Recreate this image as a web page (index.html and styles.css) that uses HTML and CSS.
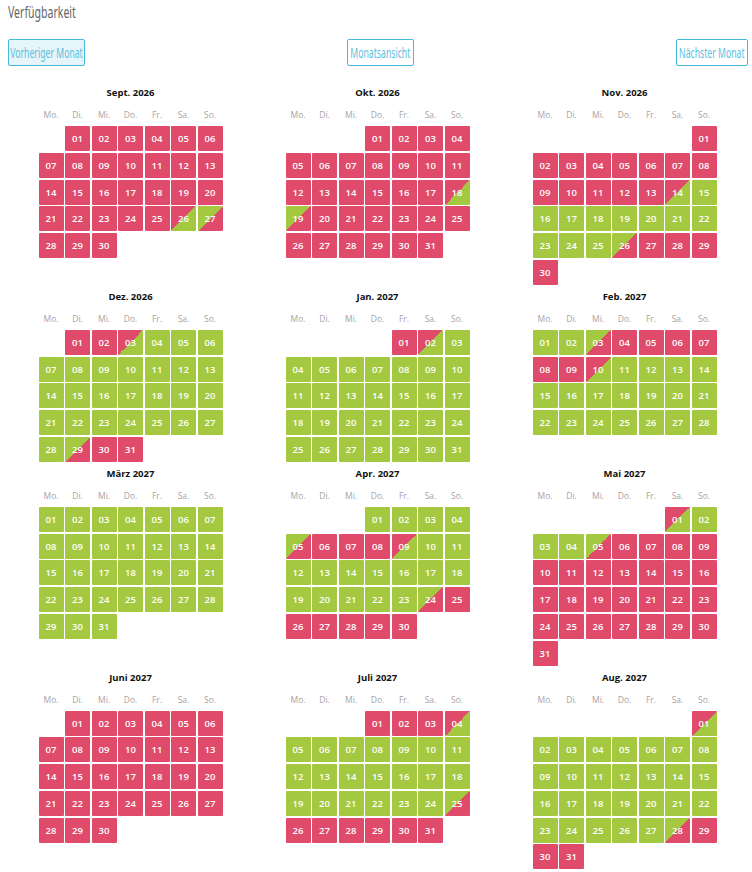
FILE: index.html
```html
<!DOCTYPE html>
<html lang="de">
<head>
<meta charset="utf-8">
<title>Verfügbarkeit</title>
<link rel="stylesheet" href="styles.css">
</head>
<body>
<div class="page">
  <h2 class="heading"><span class="narrow">Verfügbarkeit</span></h2>
  <div class="nav">
    <button class="btn btn-prev active"><span class="narrow">Vorheriger Monat</span></button>
    <button class="btn btn-month"><span class="narrow">Monatsansicht</span></button>
    <button class="btn btn-next"><span class="narrow">Nächster Monat</span></button>
  </div>
  <div class="months">

    <div class="month">
      <div class="mtitle">Sept. 2026</div>
      <div class="wd"><span>Mo.</span><span>Di.</span><span>Mi.</span><span>Do.</span><span>Fr.</span><span>Sa.</span><span>So.</span></div>
      <div class="days">
        <span class="r c2">01</span><span class="r">02</span><span class="r">03</span><span class="r">04</span><span class="r">05</span><span class="r">06</span>
        <span class="r">07</span><span class="r">08</span><span class="r">09</span><span class="r">10</span><span class="r">11</span><span class="r">12</span><span class="r">13</span>
        <span class="r">14</span><span class="r">15</span><span class="r">16</span><span class="r">17</span><span class="r">18</span><span class="r">19</span><span class="r">20</span>
        <span class="r">21</span><span class="r">22</span><span class="r">23</span><span class="r">24</span><span class="r">25</span><span class="rg">26</span><span class="gr">27</span>
        <span class="r">28</span><span class="r">29</span><span class="r">30</span>
      </div>
    </div>

    <div class="month">
      <div class="mtitle">Okt. 2026</div>
      <div class="wd"><span>Mo.</span><span>Di.</span><span>Mi.</span><span>Do.</span><span>Fr.</span><span>Sa.</span><span>So.</span></div>
      <div class="days">
        <span class="r c4">01</span><span class="r">02</span><span class="r">03</span><span class="r">04</span>
        <span class="r">05</span><span class="r">06</span><span class="r">07</span><span class="r">08</span><span class="r">09</span><span class="r">10</span><span class="r">11</span>
        <span class="r">12</span><span class="r">13</span><span class="r">14</span><span class="r">15</span><span class="r">16</span><span class="r">17</span><span class="rg">18</span>
        <span class="gr">19</span><span class="r">20</span><span class="r">21</span><span class="r">22</span><span class="r">23</span><span class="r">24</span><span class="r">25</span>
        <span class="r">26</span><span class="r">27</span><span class="r">28</span><span class="r">29</span><span class="r">30</span><span class="r">31</span>
      </div>
    </div>

    <div class="month">
      <div class="mtitle">Nov. 2026</div>
      <div class="wd"><span>Mo.</span><span>Di.</span><span>Mi.</span><span>Do.</span><span>Fr.</span><span>Sa.</span><span>So.</span></div>
      <div class="days">
        <span class="r c7">01</span>
        <span class="r">02</span><span class="r">03</span><span class="r">04</span><span class="r">05</span><span class="r">06</span><span class="r">07</span><span class="r">08</span>
        <span class="r">09</span><span class="r">10</span><span class="r">11</span><span class="r">12</span><span class="r">13</span><span class="rg">14</span><span class="g">15</span>
        <span class="g">16</span><span class="g">17</span><span class="g">18</span><span class="g">19</span><span class="g">20</span><span class="g">21</span><span class="g">22</span>
        <span class="g">23</span><span class="g">24</span><span class="g">25</span><span class="gr">26</span><span class="r">27</span><span class="r">28</span><span class="r">29</span>
        <span class="r">30</span>
      </div>
    </div>

    <div class="month">
      <div class="mtitle">Dez. 2026</div>
      <div class="wd"><span>Mo.</span><span>Di.</span><span>Mi.</span><span>Do.</span><span>Fr.</span><span>Sa.</span><span>So.</span></div>
      <div class="days">
        <span class="r c2">01</span><span class="r">02</span><span class="rg">03</span><span class="g">04</span><span class="g">05</span><span class="g">06</span>
        <span class="g">07</span><span class="g">08</span><span class="g">09</span><span class="g">10</span><span class="g">11</span><span class="g">12</span><span class="g">13</span>
        <span class="g">14</span><span class="g">15</span><span class="g">16</span><span class="g">17</span><span class="g">18</span><span class="g">19</span><span class="g">20</span>
        <span class="g">21</span><span class="g">22</span><span class="g">23</span><span class="g">24</span><span class="g">25</span><span class="g">26</span><span class="g">27</span>
        <span class="g">28</span><span class="gr">29</span><span class="r">30</span><span class="r">31</span>
      </div>
    </div>

    <div class="month">
      <div class="mtitle">Jan. 2027</div>
      <div class="wd"><span>Mo.</span><span>Di.</span><span>Mi.</span><span>Do.</span><span>Fr.</span><span>Sa.</span><span>So.</span></div>
      <div class="days">
        <span class="r c5">01</span><span class="rg">02</span><span class="g">03</span>
        <span class="g">04</span><span class="g">05</span><span class="g">06</span><span class="g">07</span><span class="g">08</span><span class="g">09</span><span class="g">10</span>
        <span class="g">11</span><span class="g">12</span><span class="g">13</span><span class="g">14</span><span class="g">15</span><span class="g">16</span><span class="g">17</span>
        <span class="g">18</span><span class="g">19</span><span class="g">20</span><span class="g">21</span><span class="g">22</span><span class="g">23</span><span class="g">24</span>
        <span class="g">25</span><span class="g">26</span><span class="g">27</span><span class="g">28</span><span class="g">29</span><span class="g">30</span><span class="g">31</span>
      </div>
    </div>

    <div class="month">
      <div class="mtitle">Feb. 2027</div>
      <div class="wd"><span>Mo.</span><span>Di.</span><span>Mi.</span><span>Do.</span><span>Fr.</span><span>Sa.</span><span>So.</span></div>
      <div class="days">
        <span class="g">01</span><span class="g">02</span><span class="gr">03</span><span class="r">04</span><span class="r">05</span><span class="r">06</span><span class="r">07</span>
        <span class="r">08</span><span class="r">09</span><span class="rg">10</span><span class="g">11</span><span class="g">12</span><span class="g">13</span><span class="g">14</span>
        <span class="g">15</span><span class="g">16</span><span class="g">17</span><span class="g">18</span><span class="g">19</span><span class="g">20</span><span class="g">21</span>
        <span class="g">22</span><span class="g">23</span><span class="g">24</span><span class="g">25</span><span class="g">26</span><span class="g">27</span><span class="g">28</span>
      </div>
    </div>

    <div class="month">
      <div class="mtitle">März 2027</div>
      <div class="wd"><span>Mo.</span><span>Di.</span><span>Mi.</span><span>Do.</span><span>Fr.</span><span>Sa.</span><span>So.</span></div>
      <div class="days">
        <span class="g">01</span><span class="g">02</span><span class="g">03</span><span class="g">04</span><span class="g">05</span><span class="g">06</span><span class="g">07</span>
        <span class="g">08</span><span class="g">09</span><span class="g">10</span><span class="g">11</span><span class="g">12</span><span class="g">13</span><span class="g">14</span>
        <span class="g">15</span><span class="g">16</span><span class="g">17</span><span class="g">18</span><span class="g">19</span><span class="g">20</span><span class="g">21</span>
        <span class="g">22</span><span class="g">23</span><span class="g">24</span><span class="g">25</span><span class="g">26</span><span class="g">27</span><span class="g">28</span>
        <span class="g">29</span><span class="g">30</span><span class="g">31</span>
      </div>
    </div>

    <div class="month">
      <div class="mtitle">Apr. 2027</div>
      <div class="wd"><span>Mo.</span><span>Di.</span><span>Mi.</span><span>Do.</span><span>Fr.</span><span>Sa.</span><span>So.</span></div>
      <div class="days">
        <span class="g c4">01</span><span class="g">02</span><span class="g">03</span><span class="g">04</span>
        <span class="gr">05</span><span class="r">06</span><span class="r">07</span><span class="r">08</span><span class="rg">09</span><span class="g">10</span><span class="g">11</span>
        <span class="g">12</span><span class="g">13</span><span class="g">14</span><span class="g">15</span><span class="g">16</span><span class="g">17</span><span class="g">18</span>
        <span class="g">19</span><span class="g">20</span><span class="g">21</span><span class="g">22</span><span class="g">23</span><span class="gr">24</span><span class="r">25</span>
        <span class="r">26</span><span class="r">27</span><span class="r">28</span><span class="r">29</span><span class="r">30</span>
      </div>
    </div>

    <div class="month">
      <div class="mtitle">Mai 2027</div>
      <div class="wd"><span>Mo.</span><span>Di.</span><span>Mi.</span><span>Do.</span><span>Fr.</span><span>Sa.</span><span>So.</span></div>
      <div class="days">
        <span class="rg c6">01</span><span class="g">02</span>
        <span class="g">03</span><span class="g">04</span><span class="gr">05</span><span class="r">06</span><span class="r">07</span><span class="r">08</span><span class="r">09</span>
        <span class="r">10</span><span class="r">11</span><span class="r">12</span><span class="r">13</span><span class="r">14</span><span class="r">15</span><span class="r">16</span>
        <span class="r">17</span><span class="r">18</span><span class="r">19</span><span class="r">20</span><span class="r">21</span><span class="r">22</span><span class="r">23</span>
        <span class="r">24</span><span class="r">25</span><span class="r">26</span><span class="r">27</span><span class="r">28</span><span class="r">29</span><span class="r">30</span>
        <span class="r">31</span>
      </div>
    </div>

    <div class="month">
      <div class="mtitle">Juni 2027</div>
      <div class="wd"><span>Mo.</span><span>Di.</span><span>Mi.</span><span>Do.</span><span>Fr.</span><span>Sa.</span><span>So.</span></div>
      <div class="days">
        <span class="r c2">01</span><span class="r">02</span><span class="r">03</span><span class="r">04</span><span class="r">05</span><span class="r">06</span>
        <span class="r">07</span><span class="r">08</span><span class="r">09</span><span class="r">10</span><span class="r">11</span><span class="r">12</span><span class="r">13</span>
        <span class="r">14</span><span class="r">15</span><span class="r">16</span><span class="r">17</span><span class="r">18</span><span class="r">19</span><span class="r">20</span>
        <span class="r">21</span><span class="r">22</span><span class="r">23</span><span class="r">24</span><span class="r">25</span><span class="r">26</span><span class="r">27</span>
        <span class="r">28</span><span class="r">29</span><span class="r">30</span>
      </div>
    </div>

    <div class="month">
      <div class="mtitle">Juli 2027</div>
      <div class="wd"><span>Mo.</span><span>Di.</span><span>Mi.</span><span>Do.</span><span>Fr.</span><span>Sa.</span><span>So.</span></div>
      <div class="days">
        <span class="r c4">01</span><span class="r">02</span><span class="r">03</span><span class="rg">04</span>
        <span class="g">05</span><span class="g">06</span><span class="g">07</span><span class="g">08</span><span class="g">09</span><span class="g">10</span><span class="g">11</span>
        <span class="g">12</span><span class="g">13</span><span class="g">14</span><span class="g">15</span><span class="g">16</span><span class="g">17</span><span class="g">18</span>
        <span class="g">19</span><span class="g">20</span><span class="g">21</span><span class="g">22</span><span class="g">23</span><span class="g">24</span><span class="gr">25</span>
        <span class="r">26</span><span class="r">27</span><span class="r">28</span><span class="r">29</span><span class="r">30</span><span class="r">31</span>
      </div>
    </div>

    <div class="month">
      <div class="mtitle">Aug. 2027</div>
      <div class="wd"><span>Mo.</span><span>Di.</span><span>Mi.</span><span>Do.</span><span>Fr.</span><span>Sa.</span><span>So.</span></div>
      <div class="days">
        <span class="rg c7">01</span>
        <span class="g">02</span><span class="g">03</span><span class="g">04</span><span class="g">05</span><span class="g">06</span><span class="g">07</span><span class="g">08</span>
        <span class="g">09</span><span class="g">10</span><span class="g">11</span><span class="g">12</span><span class="g">13</span><span class="g">14</span><span class="g">15</span>
        <span class="g">16</span><span class="g">17</span><span class="g">18</span><span class="g">19</span><span class="g">20</span><span class="g">21</span><span class="g">22</span>
        <span class="g">23</span><span class="g">24</span><span class="g">25</span><span class="g">26</span><span class="g">27</span><span class="gr">28</span><span class="r">29</span>
        <span class="r">30</span><span class="r">31</span>
      </div>
    </div>

  </div>
</div>
</body>
</html>
```

FILE: styles.css
```css
body {
  margin: 0;
  background: #ffffff;
  font-family: "Open Sans", "DejaVu Sans", sans-serif;
}

.page {
  width: 740px;
  margin-left: 8px;
}

.narrow {
  display: inline-block;
  white-space: nowrap;
  flex-shrink: 0;
  transform: scaleX(0.62);
}

.heading {
  margin: 0;
  padding-top: 2px;
  font-family: "Noto Sans", sans-serif;
  font-weight: normal;
  font-size: 17px;
  line-height: 20px;
  color: #666666;
}

.heading .narrow {
  transform-origin: left center;
}

.nav {
  display: flex;
  justify-content: space-between;
  margin-top: 17px;
}

.btn {
  display: flex;
  align-items: center;
  justify-content: center;
  height: 27px;
  box-sizing: border-box;
  padding: 0;
  overflow: visible;
  border: 1px solid #46b8da;
  border-radius: 2px;
  background: #ffffff;
  font-family: "Noto Sans", sans-serif;
  font-size: 14px;
  line-height: 25px;
  color: #5bc0de;
}

.btn .narrow {
  transform-origin: center center;
}

.btn-prev { width: 77px; }
.btn-month { width: 67px; }
.btn-next { width: 72px; }

.btn.active {
  background: #e6f5fb;
}

.months {
  display: grid;
  grid-template-columns: repeat(3, 1fr);
  align-items: start;
  row-gap: 5px;
  margin-top: 20px;
  margin-left: -1px;
}

.month {
  display: flex;
  flex-direction: column;
  align-items: center;
}

.mtitle {
  height: 14px;
  font-size: 9.5px;
  font-weight: 700;
  line-height: 14px;
  color: #111111;
}

.wd {
  display: grid;
  grid-template-columns: repeat(7, 25px);
  column-gap: 1.5px;
  margin-top: 9px;
  font-size: 8.5px;
  line-height: 12px;
  color: #a8a3a6;
  text-align: center;
}

.days {
  display: grid;
  grid-template-columns: repeat(7, 25px);
  grid-auto-rows: 25px;
  column-gap: 1.5px;
  row-gap: 1.75px;
  margin-top: 5px;
}

.days > span {
  display: flex;
  align-items: center;
  justify-content: center;
  border-radius: 1px;
  font-size: 9.5px;
  font-weight: 600;
  color: #ffffff;
}

.r { background: #e04a6b; }
.g { background: #a4c940; }
.rg { background: linear-gradient(to bottom right, #e04a6b 50%, #a4c940 50%); }
.gr { background: linear-gradient(to bottom right, #a4c940 50%, #e04a6b 50%); }

.c2 { grid-column-start: 2; }
.c4 { grid-column-start: 4; }
.c5 { grid-column-start: 5; }
.c6 { grid-column-start: 6; }
.c7 { grid-column-start: 7; }
```
